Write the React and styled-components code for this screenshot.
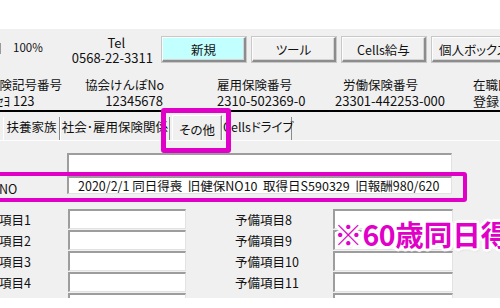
import React from "react";
import styled, { createGlobalStyle } from "styled-components";

const MAGENTA = "#e000c8";

const GlobalStyle = createGlobalStyle`
  html, body {
    margin: 0;
    padding: 0;
    background: #ffffff;
  }
  body {
    font-family: "Noto Sans CJK JP", "Noto Sans", sans-serif;
    color: #111;
    overflow: hidden;
  }
`;

const Page = styled.div`
  width: 500px;
  height: 308px;
  overflow: hidden;
`;

const TopBlank = styled.div`
  height: 29px;
  background: #ffffff;
`;

const Panel = styled.div`
  position: relative;
  height: 269px;
  background: #f0f0f0;
  overflow: hidden;
  font-size: 12.5px;
`;

const Toolbar = styled.div`
  display: flex;
  align-items: flex-start;
  height: 35px;
  white-space: nowrap;
`;

const SpinEdge = styled.div`
  width: 3px;
  height: 9px;
  margin-top: 14px;
  border: 1px solid #9a9a9a;
  border-left: none;
  background: #f6f6f6;
`;

const ZoomLabel = styled.div`
  width: 30px;
  margin: 10px 0 0 12px;
  font-size: 11.5px;
  line-height: 16px;
`;

const TelBlock = styled.div`
  width: 83px;
  margin: 6px 0 0 29px;
  text-align: center;
  line-height: 15px;
  font-size: 13px;
`;

const TelTitle = styled.div`
  padding-left: 8px;
`;

const Buttons = styled.div`
  display: flex;
  gap: 6px;
  margin: 8px 0 0 9px;
  font-feature-settings: "palt";
`;

const Button = styled.div`
  flex: none;
  width: 84px;
  height: 25px;
  box-sizing: border-box;
  display: flex;
  align-items: center;
  justify-content: center;
  background: ${(p) => (p.$accent ? "#c2ffff" : "#f1f1f1")};
  border-top: 1px solid #fdfdfd;
  border-left: 1px solid #fdfdfd;
  border-right: 2px solid #8c8c8c;
  border-bottom: 2px solid #8c8c8c;
  box-shadow: inset -1px -1px 0 #d4d4d4, 0 0 0 1px #c8c8c8;
  font-size: 12.5px;
`;

const InfoGrid = styled.div`
  display: grid;
  grid-template-columns: 98px 132px 118px 138px 120px;
  margin: 13px 0 0 -13px;
  line-height: 16px;
  white-space: nowrap;
`;

const InfoCol = styled.div`
  display: flex;
  flex-direction: column;
  align-items: ${(p) => (p.$right ? "flex-end" : "flex-start")};
  width: ${(p) => p.$w || "auto"};
  overflow: hidden;
`;

const InfoLabel = styled.div`
  align-self: flex-start;
  padding-left: ${(p) => p.$indent || 0}px;
`;

const InfoValue = styled.div`
  padding-left: ${(p) => p.$indent || 0}px;
  padding-right: ${(p) => p.$trail || 0}px;
  font-size: 13px;
`;

const Rule = styled.div`
  height: 2px;
  margin-top: 1px;
  background: #000;
`;

const TabStrip = styled.div`
  display: flex;
  align-items: flex-end;
  height: 28px;
  padding-left: 3px;
  border-bottom: 1px solid #fdfdfd;
  white-space: nowrap;
  font-feature-settings: "palt";
`;

const Tab = styled.div`
  flex: none;
  box-sizing: border-box;
  width: ${(p) => p.$w}px;
  height: ${(p) => (p.$active ? 25 : 23)}px;
  margin-left: ${(p) => (p.$active ? 2 : 0)}px;
  padding-top: ${(p) => (p.$active ? 4 : 0)}px;
  line-height: 20px;
  text-align: center;
  background: #f0f0f0;
  border-left: 1px solid #ffffff;
  border-top: ${(p) => (p.$active ? "1px solid #ffffff" : "none")};
  border-right: 1px solid #8a8a8a;
  box-shadow: ${(p) => (p.$active ? "inset -1px 0 0 #c8c8c8" : "none")};
`;

const Form = styled.div`
  margin: 12px 0 0 -26px;
  white-space: nowrap;
`;

const WideRow = styled.div`
  display: grid;
  grid-template-columns: 93px 385px;
  margin-top: ${(p) => p.$top || 0}px;
`;

const RowLabel = styled.div`
  align-self: end;
  line-height: 16px;
  margin-bottom: -3px;
`;

const InsetBox = styled.div`
  box-sizing: border-box;
  height: ${(p) => p.$h || 20}px;
  background: #ffffff;
  border-top: 2px solid #9d9d9d;
  border-left: 2px solid #9d9d9d;
  border-right: 1px solid #e2e2e2;
  border-bottom: 1px solid #e2e2e2;
  padding-left: 9px;
  font-size: 12.5px;
  line-height: 15px;
  overflow: hidden;
`;

const ItemGrid = styled.div`
  display: grid;
  grid-template-columns: 94px 118px 49px 98px 120px;
  grid-auto-rows: 20px;
  row-gap: 1px;
  margin-top: 15px;
`;

const ItemLabel = styled.div`
  grid-column: ${(p) => p.$col};
  display: flex;
  align-items: center;
  font-size: 12.5px;
`;

const ItemBox = styled(InsetBox)`
  grid-column: ${(p) => p.$col};
`;

const Highlight = styled.div`
  position: absolute;
  left: ${(p) => p.$x}px;
  top: ${(p) => p.$y}px;
  width: ${(p) => p.$w}px;
  height: ${(p) => p.$h}px;
  box-sizing: border-box;
  border: ${(p) => p.$t}px solid ${MAGENTA};
  border-radius: 3px;
  pointer-events: none;
`;

const Callout = styled.div`
  position: absolute;
  left: 334px;
  top: 189px;
  font-size: 28.5px;
  font-weight: 700;
  line-height: 32px;
  color: ${MAGENTA};
  white-space: nowrap;
  text-shadow:
    2px 0 0 #fff, -2px 0 0 #fff, 0 2px 0 #fff, 0 -2px 0 #fff,
    2px 2px 0 #fff, -2px -2px 0 #fff, 2px -2px 0 #fff, -2px 2px 0 #fff,
    3px 0 1px #fff, -3px 0 1px #fff, 0 3px 1px #fff, 0 -3px 1px #fff,
    1px 2px 3px rgba(0, 0, 0, 0.25);
`;

const Digits = styled.span`
  letter-spacing: -0.5px;
`;

const BottomBlank = styled.div`
  height: 10px;
  background: #ffffff;
`;

const tabs = [
  { label: "扶養家族", w: 57 },
  { label: "社会･雇用保険関係", w: 110 },
  { label: "その他", w: 50, active: true },
  { label: "Cellsドライブ", w: 70 },
];

const items = [
  ["予備項目1", "予備項目8"],
  ["予備項目2", "予備項目9"],
  ["予備項目3", "予備項目10"],
  ["予備項目4", "予備項目11"],
  ["予備項目5", "予備項目12"],
];

export default function App() {
  return (
    <Page>
      <GlobalStyle />
      <TopBlank />
      <Panel>
        <Toolbar>
          <SpinEdge />
          <ZoomLabel>100%</ZoomLabel>
          <TelBlock>
            <TelTitle>Tel</TelTitle>
            <div>0568-22-3311</div>
          </TelBlock>
          <Buttons>
            <Button $accent>新規</Button>
            <Button>ツール</Button>
            <Button>Cells給与</Button>
            <Button>個人ボックス</Button>
          </Buttons>
        </Toolbar>

        <InfoGrid>
          <InfoCol>
            <InfoLabel>保険記号番号</InfoLabel>
            <InfoValue $indent={10}>ｾﾖ 123</InfoValue>
          </InfoCol>
          <InfoCol $right $w="80px">
            <InfoLabel>協会けんぽNo</InfoLabel>
            <InfoValue $trail={2}>12345678</InfoValue>
          </InfoCol>
          <InfoCol>
            <InfoLabel>雇用保険番号</InfoLabel>
            <InfoValue>2310-502369-0</InfoValue>
          </InfoCol>
          <InfoCol>
            <InfoLabel $indent={8}>労働保険番号</InfoLabel>
            <InfoValue>23301-442253-000</InfoValue>
          </InfoCol>
          <InfoCol>
            <InfoLabel>在職区分</InfoLabel>
            <InfoValue>登録なし</InfoValue>
          </InfoCol>
        </InfoGrid>

        <Rule />

        <TabStrip>
          {tabs.map((t) => (
            <Tab key={t.label} $w={t.w} $active={t.active}>
              {t.label}
            </Tab>
          ))}
        </TabStrip>

        <Form>
          <WideRow>
            <RowLabel />
            <InsetBox $h={21} />
          </WideRow>
          <WideRow $top={2}>
            <RowLabel>管理NO</RowLabel>
            <InsetBox $h={18}>
              2020/2/1 同日得喪&nbsp;&nbsp;旧健保NO10&nbsp;&nbsp;取得日S590329&nbsp;&nbsp;旧報酬980/620
            </InsetBox>
          </WideRow>

          <ItemGrid>
            {items.map(([left, right]) => (
              <React.Fragment key={left}>
                <ItemLabel $col={1}>{left}</ItemLabel>
                <ItemBox $col={2} />
                <ItemLabel $col={4}>{right}</ItemLabel>
                <ItemBox $col={5} />
              </React.Fragment>
            ))}
          </ItemGrid>
        </Form>

        <Highlight $x={161} $y={79} $w={70} $h={45} $t={5} />
        <Highlight $x={-6} $y={143} $w={473} $h={30} $t={4} />
        <Callout>
          ※<Digits>60</Digits>歳同日得喪
        </Callout>
      </Panel>
      <BottomBlank />
    </Page>
  );
}
